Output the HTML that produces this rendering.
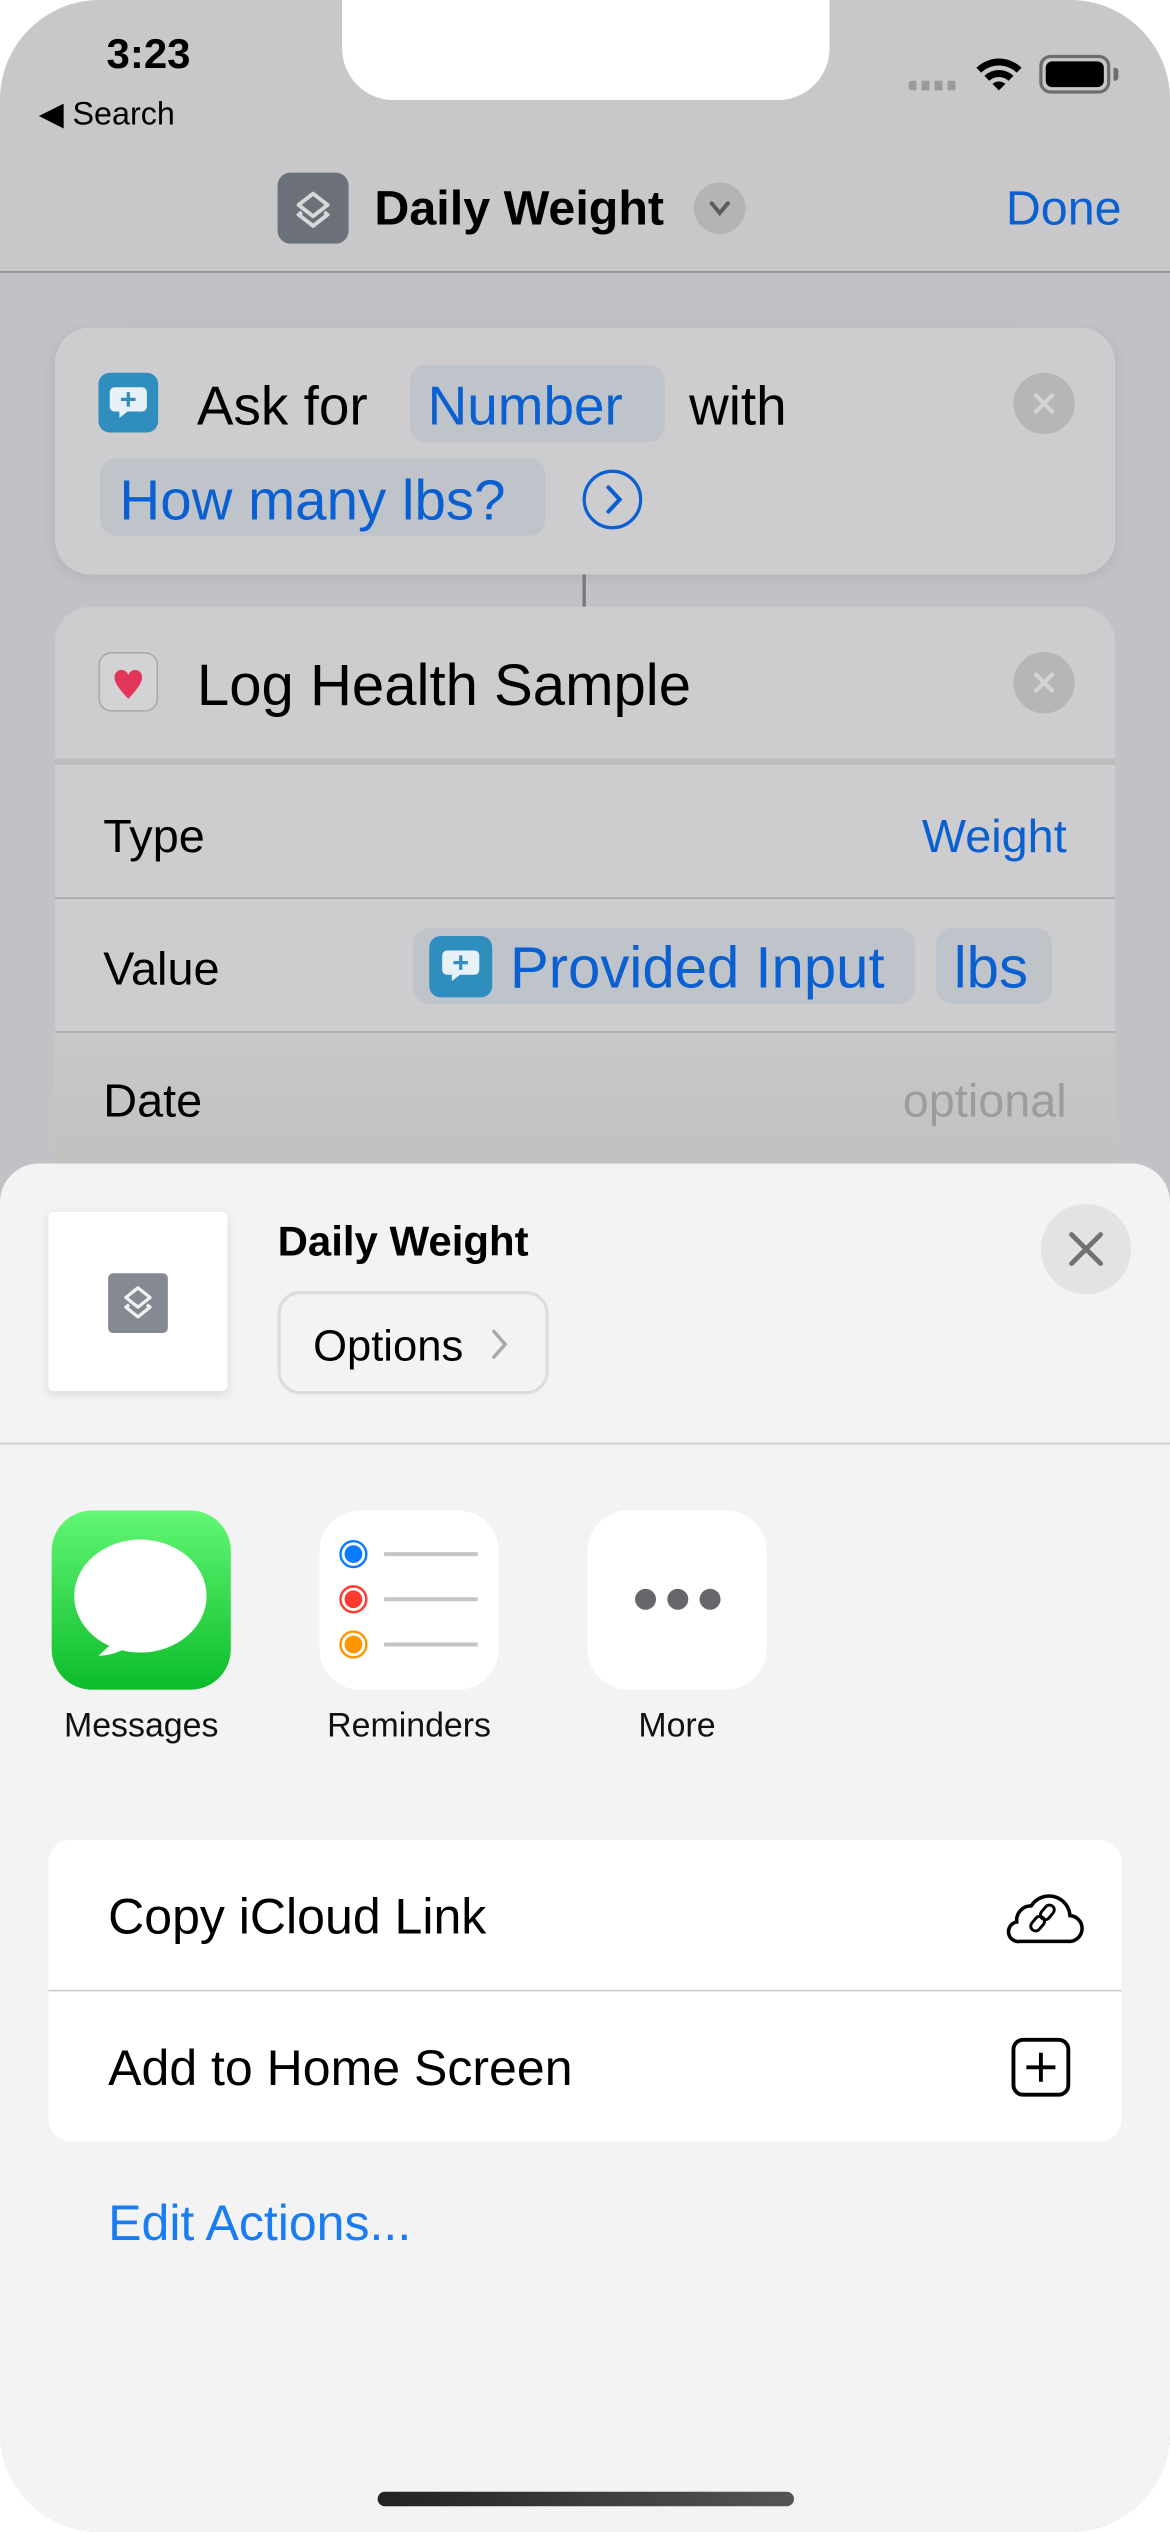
<!DOCTYPE html>
<html><head><meta charset="utf-8"><style>
*{margin:0;padding:0;box-sizing:border-box}
html,body{width:1170px;height:2532px;overflow:hidden;background:#fff}
#w{position:absolute;left:0;top:0;width:725px;height:1569px;transform:scale(1.613793);transform-origin:0 0;font-family:"Liberation Sans",sans-serif}
#scr{position:absolute;left:0;top:0;width:725px;height:1569px;border-radius:62px;overflow:hidden;background:#c2c2c6}
.a{position:absolute}
.t{position:absolute;white-space:nowrap}
.blue{color:#0a5fd1}
.pill{position:absolute;background:#bfc4cb;border-radius:10px}
</style></head><body><div id="w"><div id="scr">
<div class="a" style="left:0;top:0;width:725px;height:169px;background:#c8c8ca;border-bottom:1px solid #8f8f92"></div>
<div class="a" style="left:212px;top:-10px;width:302px;height:72px;background:#fff;border-radius:0 0 32px 32px"></div>
<div class="t" style="left:66px;top:18px;font-size:26px;font-weight:bold;color:#000">3:23</div>
<div class="t" style="left:24px;top:58px;font-size:20px;color:#000">◀ Search</div>
<div class="a" style="left:563px;top:50px;width:30px;height:6px;background:repeating-linear-gradient(90deg,#9a9a9c 0 5px,transparent 5px 8px);border-radius:2px"></div>
<svg class="a" style="left:603px;top:33px" width="32" height="26" viewBox="0 0 32 26"><path d="M2 9a20 20 0 0 1 28 0l-3 3a16 16 0 0 0-22 0z M7 14a13 13 0 0 1 18 0l-3 3a9 9 0 0 0-12 0z M12 19a6 6 0 0 1 8 0l-4 4z" fill="#000"/></svg>
<div class="a" style="left:644px;top:34px;width:44px;height:24px;border:2px solid #6d6d6f;border-radius:7px;padding:2px"><div style="width:100%;height:100%;background:#000;border-radius:4px"></div></div>
<div class="a" style="left:690px;top:42px;width:3px;height:8px;background:#6d6d6f;border-radius:0 2px 2px 0"></div>
<div class="a" style="left:172px;top:107px;width:44px;height:44px;background:#6b7079;border-radius:8px"></div>
<svg class="a" style="left:172px;top:107px" width="44" height="44" viewBox="0 0 44 44"><path d="M22 13l9 7-9 7-9-7z M15 24.5l-2 1.5 9 7 9-7-2-1.5" fill="none" stroke="#d8d8d8" stroke-width="2.4" stroke-linejoin="round"/></svg>
<div class="t" style="left:232px;top:113px;font-size:30px;font-weight:bold;color:#000">Daily Weight</div>
<div class="a" style="left:430px;top:113px;width:32px;height:32px;border-radius:50%;background:#b4b4b7"></div>
<svg class="a" style="left:430px;top:113px" width="32" height="32"><path d="M11 13l5 6 5-6" fill="none" stroke="#5d5d60" stroke-width="2.5" stroke-linecap="round"/></svg>
<div class="t blue" style="right:30px;top:113px;font-size:30px">Done</div>

<div class="a" style="left:34px;top:203px;width:657px;height:153px;background:#cdcdcf;border-radius:22px;box-shadow:0 2px 8px rgba(0,0,0,.08)"></div>
<div class="a" style="left:61px;top:231px;width:37px;height:37px;background:#2f8ebd;border-radius:7px"></div>
<svg class="a" style="left:61px;top:231px" width="37" height="37"><path d="M10 9h17a3 3 0 0 1 3 3v9a3 3 0 0 1-3 3h-9l-5 4v-4h-3a3 3 0 0 1-3-3v-9a3 3 0 0 1 3-3z" fill="#e8f1f7"/><path d="M18.5 12v9M14 16.5h9" stroke="#2f8ebd" stroke-width="2"/></svg>
<div class="t" style="left:122px;top:233px;font-size:34px;color:#000">Ask for</div>
<div class="pill" style="left:254px;top:226px;width:158px;height:48px"></div>
<div class="t blue" style="left:265px;top:233px;font-size:34px">Number</div>
<div class="t" style="left:427px;top:233px;font-size:34px;color:#000">with</div>
<div class="pill" style="left:62px;top:284px;width:276px;height:48px"></div>
<div class="t blue" style="left:74px;top:291px;font-size:35px">How many lbs?</div>
<div class="a" style="left:361px;top:291px;width:37px;height:37px;border:2.5px solid #0a5fd1;border-radius:50%"></div>
<svg class="a" style="left:361px;top:291px" width="37" height="37"><path d="M16 11l7 7.5-7 7.5" fill="none" stroke="#0a5fd1" stroke-width="2.5" stroke-linecap="round"/></svg>
<div class="a" style="left:628px;top:231px;width:38px;height:38px;border-radius:50%;background:#b6b6b8"></div>
<svg class="a" style="left:628px;top:231px" width="38" height="38"><path d="M14 14l10 10M24 14l-10 10" stroke="#d4d4d6" stroke-width="2.5" stroke-linecap="round"/></svg>
<div class="a" style="left:361px;top:356px;width:2px;height:20px;background:#777"></div>

<div class="a" style="left:34px;top:376px;width:657px;height:380px;background:#cdcdcf;border-radius:22px;overflow:hidden">
 <div class="a" style="left:0;top:94px;width:657px;height:4px;background:#bcbcbe"></div>
 <div class="a" style="left:0;top:180px;width:657px;height:1px;background:#a5a5a7"></div>
 <div class="a" style="left:0;top:263px;width:657px;height:1px;background:#a5a5a7"></div>
 <div class="a" style="left:0;top:264px;width:657px;height:120px;background:linear-gradient(#c8c8c8,#bdbebc)"></div>
</div>
<div class="a" style="left:61px;top:404px;width:37px;height:37px;border:1px solid #aaa;border-radius:8px;background:#d3d3d5"></div>
<svg class="a" style="left:61px;top:404px" width="37" height="37"><path d="M18.5 29C12 22 10 19 10 15.5a4.3 4.3 0 0 1 8.5-1 4.3 4.3 0 0 1 8.5 1c0 3.5-2 6.5-8.5 13.5z" fill="#e3345a"/></svg>
<div class="t" style="left:122px;top:404px;font-size:36px;color:#000">Log Health Sample</div>
<div class="a" style="left:628px;top:404px;width:38px;height:38px;border-radius:50%;background:#b6b6b8"></div>
<svg class="a" style="left:628px;top:404px" width="38" height="38"><path d="M14 14l10 10M24 14l-10 10" stroke="#d4d4d6" stroke-width="2.5" stroke-linecap="round"/></svg>
<div class="t" style="left:64px;top:503px;font-size:29px;color:#000">Type</div>
<div class="t blue" style="right:64px;top:503px;font-size:29px">Weight</div>
<div class="t" style="left:64px;top:585px;font-size:29px;color:#000">Value</div>
<div class="pill" style="left:256px;top:575px;width:311px;height:47px"></div>
<div class="a" style="left:266px;top:580px;width:39px;height:38px;background:#2f8ebd;border-radius:7px"></div>
<svg class="a" style="left:267px;top:580px" width="37" height="37"><path d="M10 9h17a3 3 0 0 1 3 3v9a3 3 0 0 1-3 3h-9l-5 4v-4h-3a3 3 0 0 1-3-3v-9a3 3 0 0 1 3-3z" fill="#e8f1f7"/><path d="M18.5 12v9M14 16.5h9" stroke="#2f8ebd" stroke-width="2"/></svg>
<div class="t blue" style="left:316px;top:579px;font-size:36px">Provided Input</div>
<div class="pill" style="left:580px;top:575px;width:72px;height:47px"></div>
<div class="t blue" style="left:591px;top:579px;font-size:36px">lbs</div>
<div class="t" style="left:64px;top:667px;font-size:29px;color:#000">Date</div>
<div class="t" style="right:64px;top:667px;font-size:29px;color:#9c9c9c">optional</div>

<div class="a" style="left:0;top:721px;width:725px;height:860px;background:#f3f3f3;border-radius:24px 24px 0 0"></div>
<div class="a" style="left:30px;top:751px;width:111px;height:111px;background:#fff;border-radius:3px;box-shadow:0 2px 6px rgba(0,0,0,.1)"></div>
<div class="a" style="left:67px;top:789px;width:37px;height:37px;background:#858a92;border-radius:3px"></div>
<svg class="a" style="left:67px;top:789px" width="37" height="37"><path d="M18.5 9l7.5 6-7.5 6-7.5-6z M13 19.5l-2 1.5 7.5 6 7.5-6-2-1.5" fill="none" stroke="#f2f2f2" stroke-width="2" stroke-linejoin="round"/></svg>
<div class="t" style="left:172px;top:754px;font-size:26px;font-weight:bold;color:#000">Daily Weight</div>
<div class="a" style="left:172px;top:800px;width:168px;height:64px;border:2px solid #dcdcdc;border-radius:14px"></div>
<div class="t" style="left:194px;top:819px;font-size:27px;color:#000">Options</div>
<svg class="a" style="left:303px;top:822px" width="14" height="22"><path d="M3 3l7 8-7 8" fill="none" stroke="#aaa" stroke-width="2.2" stroke-linecap="round"/></svg>
<div class="a" style="left:645px;top:746px;width:56px;height:56px;border-radius:50%;background:#e3e3e3"></div>
<svg class="a" style="left:645px;top:746px" width="56" height="56"><path d="M19 19l18 18M37 19l-18 18" stroke="#727272" stroke-width="3" stroke-linecap="round"/></svg>
<div class="a" style="left:0;top:894px;width:725px;height:1px;background:#c6c6c6"></div>

<div class="a" style="left:32px;top:936px;width:111px;height:111px;border-radius:25px;background:linear-gradient(#62f774,#0cbc2a)"></div>
<svg class="a" style="left:32px;top:936px" width="111" height="111"><ellipse cx="55" cy="53" rx="41" ry="35" fill="#fff"/><path d="M40 80l-11 10c8 0 15-3 20-7z" fill="#fff"/></svg>
<div class="a" style="left:198px;top:936px;width:111px;height:111px;border-radius:25px;background:#fff"></div>
<svg class="a" style="left:198px;top:936px" width="111" height="111"><g stroke-width="1.5"><circle cx="21" cy="27" r="8" fill="#fff" stroke="#0a7bff"/><circle cx="21" cy="27" r="5.5" fill="#0a7bff"/><circle cx="21" cy="55" r="8" fill="#fff" stroke="#ff3b30"/><circle cx="21" cy="55" r="5.5" fill="#ff3b30"/><circle cx="21" cy="83" r="8" fill="#fff" stroke="#ff9500"/><circle cx="21" cy="83" r="5.5" fill="#ff9500"/></g><path d="M40 27h58M40 55h58M40 83h58" stroke="#c4c4c6" stroke-width="2.5"/></svg>
<div class="a" style="left:364px;top:936px;width:111px;height:111px;border-radius:25px;background:#fff"></div>
<svg class="a" style="left:364px;top:936px" width="111" height="111"><circle cx="36" cy="55" r="6.5" fill="#66666c"/><circle cx="56" cy="55" r="6.5" fill="#66666c"/><circle cx="76" cy="55" r="6.5" fill="#66666c"/></svg>
<div class="t" style="left:22px;top:1058px;width:131px;text-align:center;font-size:21px;color:#111">Messages</div>
<div class="t" style="left:188px;top:1058px;width:131px;text-align:center;font-size:21px;color:#111">Reminders</div>
<div class="t" style="left:354px;top:1058px;width:131px;text-align:center;font-size:21px;color:#111">More</div>

<div class="a" style="left:30px;top:1140px;width:665px;height:187px;background:#fff;border-radius:14px"></div>
<div class="a" style="left:30px;top:1233px;width:665px;height:1px;background:#cbcbcb"></div>
<div class="t" style="left:67px;top:1170px;font-size:31px;color:#000">Copy iCloud Link</div>
<div class="t" style="left:67px;top:1264px;font-size:31px;color:#000">Add to Home Screen</div>
<svg class="a" style="left:620px;top:1167px" width="52" height="40" viewBox="0 0 52 40"><path d="M12 36h30a8 8 0 0 0 1-16 13 13 0 0 0-24-6 9 9 0 0 0-9 10 6 6 0 0 0 2 12z" fill="none" stroke="#000" stroke-width="2.2"/><g fill="none" stroke="#000" stroke-width="1.8"><rect x="26" y="13" width="6" height="10" rx="3" transform="rotate(40 29 18)"/><rect x="20" y="20" width="6" height="10" rx="3" transform="rotate(40 23 25)"/></g></svg>
<svg class="a" style="left:626px;top:1262px" width="40" height="40"><rect x="2" y="2" width="34" height="34" rx="6" fill="none" stroke="#000" stroke-width="2.4"/><path d="M19 10v18M10 19h18" stroke="#000" stroke-width="2.4"/></svg>
<div class="t" style="left:67px;top:1360px;font-size:31px;color:#1a7cf5">Edit Actions...</div>
<div class="a" style="left:234px;top:1544px;width:258px;height:9px;border-radius:5px;background:linear-gradient(90deg,#222,#555)"></div>
</div></div></body></html>
